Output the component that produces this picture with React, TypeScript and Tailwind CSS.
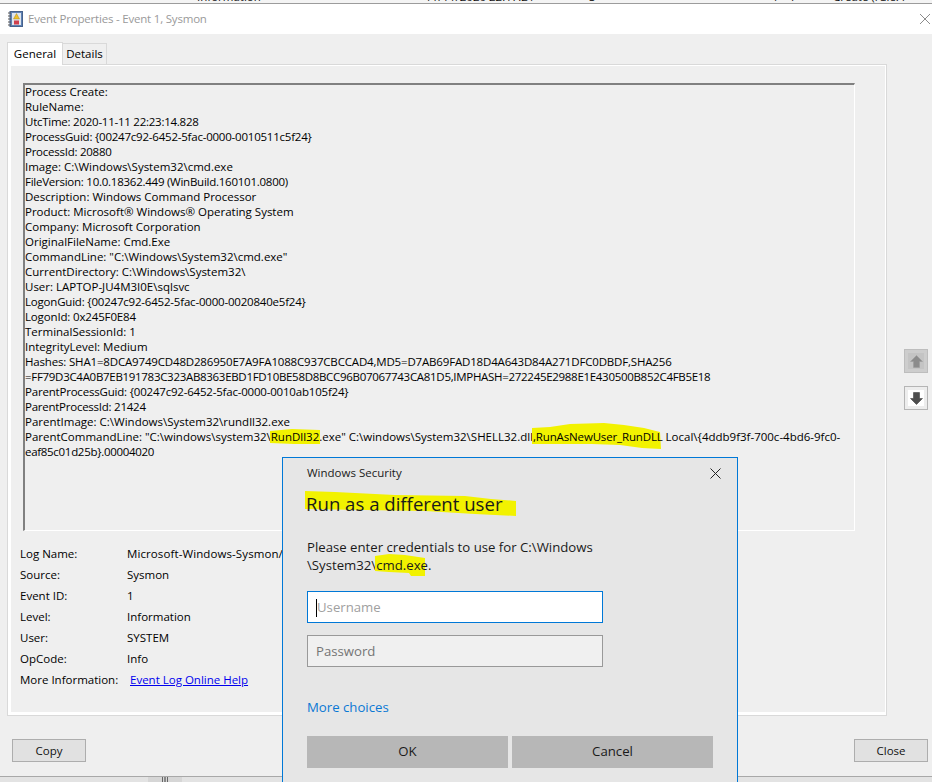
const lines: [string, string][] = [
  ['Process Create:', ''],
  ['RuleName:', ''],
  ['UtcTime: 2020-11-11 22:23:14.828', 'tracking-[-0.25px]'],
  ['ProcessGuid: {00247c92-6452-5fac-0000-0010511c5f24}', 'tracking-[-0.22px]'],
  ['ProcessId: 20880', 'tracking-[-0.25px]'],
  ['Image: C:\\Windows\\System32\\cmd.exe', ''],
  ['FileVersion: 10.0.18362.449 (WinBuild.160101.0800)', 'tracking-[-0.25px]'],
  ['Description: Windows Command Processor', ''],
  ['Product: Microsoft® Windows® Operating System', ''],
  ['Company: Microsoft Corporation', ''],
  ['OriginalFileName: Cmd.Exe', ''],
  ['CommandLine: "C:\\Windows\\System32\\cmd.exe"', ''],
  ['CurrentDirectory: C:\\Windows\\System32\\', ''],
  ['User: LAPTOP-JU4M3I0E\\sqlsvc', ''],
  ['LogonGuid: {00247c92-6452-5fac-0000-0020840e5f24}', 'tracking-[-0.2px]'],
  ['LogonId: 0x245F0E84', 'tracking-[-0.15px]'],
  ['TerminalSessionId: 1', ''],
  ['IntegrityLevel: Medium', ''],
  ['Hashes: SHA1=8DCA9749CD48D286950E7A9FA1088C937CBCCAD4,MD5=D7AB69FAD18D4A643D84A271DFC0DBDF,SHA256', 'tracking-[-0.17px]'],
  ['=FF79D3C4A0B7EB191783C323AB8363EBD1FD10BE58D8BCC96B07067743CA81D5,IMPHASH=272245E2988E1E430500B852C4FB5E18', 'tracking-[-0.3px]'],
  ['ParentProcessGuid: {00247c92-6452-5fac-0000-0010ab105f24}', 'tracking-[-0.2px]'],
  ['ParentProcessId: 21424', 'tracking-[-0.25px]'],
  ['ParentImage: C:\\Windows\\System32\\rundll32.exe', ''],
]

const info = [
  ['Log Name:', 'Microsoft-Windows-Sysmon/Operational', 'tracking-[0.1px]'],
  ['Source:', 'Sysmon', ''],
  ['Event ID:', '1', ''],
  ['Level:', 'Information', ''],
  ['User:', 'SYSTEM', ''],
  ['OpCode:', 'Info', ''],
]

// freehand yellow marker strokes, drawn behind the text
function Mark({ w, h, d, pos, children }: { w: number; h: number; d: string; pos: string; children: React.ReactNode }) {
  return (
    <span className="relative isolate">
      <svg width={w} height={h} viewBox={`0 0 ${w} ${h}`} className={`absolute -z-10 max-w-none ${pos}`}>
        <path d={d} fill="#f2f200" />
      </svg>
      {children}
    </span>
  )
}

function ArrowBtn({ up }: { up?: boolean }) {
  return (
    <div className={`w-[24px] h-[24px] border flex items-center justify-center ${up ? 'border-[#bdbdbd] bg-[#cdcdcd]' : 'border-[#b5b5b5] bg-[#ededed]'}`}>
      <div className={`w-[16px] h-[16px] flex items-center justify-center ${up ? 'bg-[#c4c4c4]' : 'bg-white'}`}>
        <svg width="13" height="13" viewBox="0 0 13 13" className={up ? '' : 'rotate-180'}>
          <path d="M6.5 0.5 L12.5 6.5 L9.5 6.5 L9.5 12.5 L3.5 12.5 L3.5 6.5 L0.5 6.5 Z" fill={up ? '#8c8c8c' : '#4d4d4d'} stroke={up ? '#9a9a9a' : '#333'} strokeWidth="0.5" />
        </svg>
      </div>
    </div>
  )
}

function WinButton({ label }: { label: string }) {
  return (
    <button className="w-[74px] h-[23px] border border-[#adadad] bg-[#e1e1e1] text-[#111] flex items-center justify-center">
      {label}
    </button>
  )
}

export default function App() {
  return (
    <div className="relative w-[932px] h-[782px] overflow-hidden bg-[#e3e3e3] text-[11.5px] text-black font-['Open_Sans',sans-serif]">
      {/* Event viewer list behind the window, only the feet of its row show */}
      <div className="h-[4px] bg-[#f4f4f4] border-b border-[#9c9c9c] overflow-hidden">
        <div className="flex -mt-[11px] h-[15px] leading-[15px] whitespace-nowrap text-[#111]">
          <span className="w-[197px]" />
          <span className="w-[228px]">Information</span>
          <span className="w-[164px]">11/11/2020 22:17:21</span>
          <span className="w-[183px]">S</span>
          <span className="w-[19px]">1</span>
          <span className="w-[42px]">P</span>
          <span>Create (rule: P</span>
        </div>
      </div>

      <div className="h-[772px] bg-[#efefef] flex flex-col">
        <div className="h-[30px] bg-white flex items-center pl-[8px] pr-[1px] shrink-0">
          <svg width="15" height="16" viewBox="0 0 15 16" className="mr-[5px]">
            <rect x="2" y="0.5" width="12.5" height="15" fill="#5f82b5" stroke="#46628c" />
            <rect x="4" y="2" width="9" height="12" fill="#dfe6ee" />
            <path d="M0 2h3M0 5h3M0 8h3M0 11h3M0 14h3" stroke="#555" strokeWidth="1" />
            <path d="M8.5 2.5 L11.5 8 L5.5 8 Z" fill="#eec12c" stroke="#9c7a10" strokeWidth="0.4" />
            <rect x="6" y="9.5" width="5" height="4" fill="#cf3f4e" />
          </svg>
          <span className="text-[#9a9a9a] tracking-[-0.2px]">Event Properties - Event 1, Sysmon</span>
          <svg width="12" height="12" viewBox="0 0 12 12" className="ml-auto">
            <path d="M1 1 L11 11 M11 1 L1 11" stroke="#8c8c8c" strokeWidth="1" />
          </svg>
        </div>

        <div className="flex pl-[7px] pt-[8px] h-[30px] items-end shrink-0">
          <div className="w-[56px] h-[23px] bg-white border border-[#d9d9d9] border-b-0 flex items-center justify-center -mb-[1px] relative z-10">General</div>
          <div className="w-[44px] h-[21px] border border-[#d9d9d9] border-l-0 border-b-0 flex items-center justify-center">Details</div>
        </div>

        <div className="flex flex-1 pl-[7px] min-h-0">
          <div className="w-[880px] h-[652px] border border-[#d9d9d9] bg-white pl-[3px] pt-px pr-px pb-[3px]">
            <div className="h-full bg-[#efefef] flex flex-col">
              <div className="pl-[12px] pt-[17px]">
                <div className="w-[832px] h-[448px] border-t-2 border-l-2 border-t-[#808080] border-l-[#808080] border-r border-b border-r-white border-b-white leading-[15px]">
                  <div className="-mt-px">
                    {lines.map(([l, t], i) => (
                      <div key={i} className={`whitespace-nowrap h-[15px] ${t}`}>{l}</div>
                    ))}
                    <div className="whitespace-nowrap h-[15px]">
                      ParentCommandLine: "C:\windows\system32\
                      <Mark w={50} h={16} pos="-left-[1px] top-0" d="M0 2 L22 0 L50 1 L50 15 L24 15 L0 14 Z">RunDll32</Mark>
                      .exe" C:\windows\System32\SHELL32.dll
                      <span className="tracking-[-0.15px]">
                        <Mark w={129} h={27} pos="-left-[1px] -top-[6px]" d="M0 5 L18 4 L38 1 L72 0 L92 2 L112 5 L128 9 L129 26 L110 25 L88 22 L60 21 L30 21 L0 21 Z">,RunAsNewUser_RunDLL</Mark>
                      </span>
                      {' '}Local\{'{'}4ddb9f3f-700c-4bd6-9fc0-
                    </div>
                    <div className="whitespace-nowrap h-[15px] tracking-[-0.3px]">eaf85c01d25b{'}'}.00004020</div>
                  </div>
                </div>
              </div>
              <div className="pl-[9px] pt-[12px]">
                {info.map(([k, v, t]) => (
                  <div key={k} className="flex h-[21px] items-center">
                    <span className="w-[107px]">{k}</span>
                    <span className={`whitespace-nowrap ${t}`}>{v}</span>
                  </div>
                ))}
                <div className="flex h-[21px] items-center">
                  <span className="w-[110px]">More Information:</span>
                  <span className="text-[#0000ee] underline">Event Log Online Help</span>
                </div>
              </div>
            </div>
          </div>
          <div className="flex flex-col gap-[13px] pl-[17px] pt-[285px]">
            <ArrowBtn up />
            <ArrowBtn />
          </div>
        </div>

        <div className="flex justify-between pl-[12px] pr-[4px] pb-[14px] shrink-0">
          <WinButton label="Copy" />
          <WinButton label="Close" />
        </div>
      </div>

      {/* sliver of the list window under the dialog */}
      <div className="h-[6px] border-t border-[#a8a8a8] bg-[#e3e3e3] flex pl-[148px]">
        <div className="w-[34px] bg-[#d6d6d6] flex justify-center gap-px">
          <span className="w-px bg-[#666]" />
          <span className="w-[2px] bg-[#888]" />
          <span className="w-px bg-[#666]" />
        </div>
      </div>

      {/* Windows Security credential dialog */}
      <div className="absolute left-[282px] top-[457px] w-[456px] h-[325px] bg-[#e6e6e6] border border-[#0078d7] border-b-0 pl-[24px] pr-[24px] text-[#1a1a1a]">
        <div className="flex items-center justify-between h-[30px]">
          <span>Windows Security</span>
          <svg width="11" height="11" viewBox="0 0 11 11" className="-mr-[8px]">
            <path d="M0.5 0.5 L10.5 10.5 M10.5 0.5 L0.5 10.5" stroke="#222" strokeWidth="1" />
          </svg>
        </div>
        <div className="text-[18.6px] leading-[26px] mt-[3px] -ml-px">
          <Mark w={211} h={26} pos="-left-[1px] top-0" d="M0 0 L30 1 L90 4 L160 5 L186 8 L211 10 L211 25 L170 23 L120 20 L60 19 L0 18 Z">Run as a different user</Mark>
        </div>
        <div className="text-[13.2px] leading-[18px] mt-[21px] w-[310px]">
          Please enter credentials to use for C:\Windows<br />
          \System32\
          <Mark w={50} h={23} pos="-left-[1px] -top-[2px]" d="M0 2 L14 0 L30 1 L50 4 L50 22 L36 22 L34 19 L14 18 L0 17 Z">cmd.exe</Mark>.
        </div>
        <div className="mt-[17px] w-[296px] flex flex-col gap-[12px]">
          <div className="h-[32px] border border-[#0078d7] bg-white flex items-center pl-[8px] pt-[2px] text-[13.2px] text-[#a0a0a0]">
            <span className="w-px h-[18px] bg-black" />Username
          </div>
          <div className="h-[32px] border border-[#999] bg-[#f0f0f0] flex items-center pl-[8px] pt-[2px] text-[13.2px] text-[#757575]">
            Password
          </div>
        </div>
        <div className="mt-[30px] text-[13.2px] leading-[20px] text-[#0a78d4]">More choices</div>
        <div className="mt-[19px] flex gap-[4px] text-[13.2px]">
          <div className="w-[201px] h-[32px] bg-[#b7b7b7] flex items-center justify-center">OK</div>
          <div className="w-[201px] h-[32px] bg-[#b7b7b7] flex items-center justify-center">Cancel</div>
        </div>
      </div>
    </div>
  )
}
